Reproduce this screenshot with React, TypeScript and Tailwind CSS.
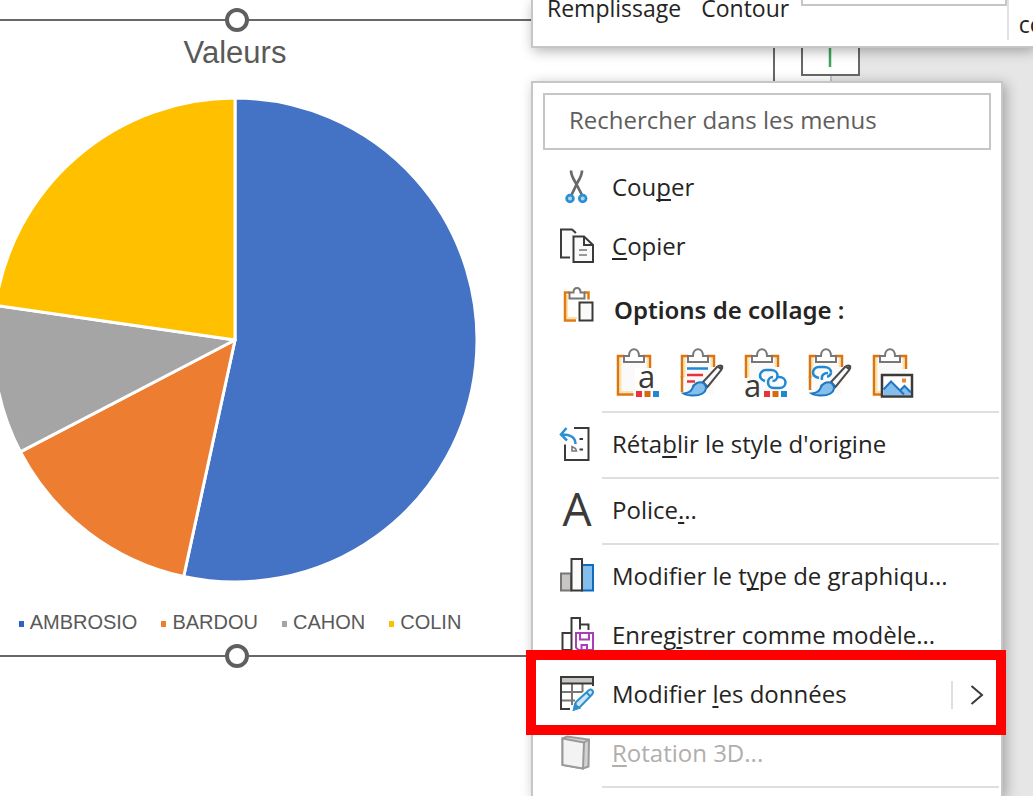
import React from "react";
import { clsx } from "clsx";

const slices = [
  { color: "#4472c4", path: "M235 242V0A242 242 0 1 1 183.700 478.500Z" },
  { color: "#ed7d31", path: "M235 242L183.700 478.500A242 242 0 0 1 20.300 353.800Z" },
  { color: "#a5a5a5", path: "M235 242L20.300 353.800A242 242 0 0 1 -4.500 207.400Z" },
  { color: "#ffc000", path: "M235 242L-4.500 207.400A242 242 0 0 1 235 0Z" },
];

const legend = [
  { label: "AMBROSIO", marker: "bg-[#2f62c4]" },
  { label: "BARDOU", marker: "bg-[#ed7d31]" },
  { label: "CAHON", marker: "bg-[#a5a5a5]" },
  { label: "COLIN", marker: "bg-[#ffc000]" },
];

function Handle({ className }: { className: string }) {
  return (
    <span
      className={clsx(
        "absolute left-1/2 size-6 -translate-x-1/2 rounded-full border-4 border-[#5f5f5f] bg-white",
        className
      )}
    />
  );
}

function Chart() {
  return (
    <section className="w-[775px] shrink-0 border-y-2 border-r-2 border-[#686868]">
      <div className="relative flex w-[474px] flex-col items-center pt-3.5 pb-[21px] font-['Liberation_Sans',sans-serif] text-[#595959]">
        <Handle className="-top-[13px]" />
        <h1 className="mr-1 text-[31px] leading-9">Valeurs</h1>
        <svg
          viewBox="0 0 474 484"
          className="mt-[27px] h-[484px] w-[474px] overflow-visible"
        >
          {slices.map((slice) => (
            <path
              key={slice.color}
              d={slice.path}
              fill={slice.color}
              stroke="#fff"
              strokeWidth="3"
              strokeLinejoin="round"
            />
          ))}
        </svg>
        <ul className="mt-7 ml-1.5 flex gap-6 text-[20px] leading-6">
          {legend.map((item) => (
            <li key={item.label} className="flex items-center gap-1.5">
              <span className={clsx("mt-1 h-1.5 w-[5px]", item.marker)} />
              {item.label}
            </li>
          ))}
        </ul>
        <Handle className="-bottom-[13px]" />
      </div>
    </section>
  );
}

const iconProps = {
  fill: "none",
  stroke: "#3b3a39",
  strokeWidth: 2,
  className: "h-9 w-[34px] shrink-0 overflow-visible",
  viewBox: "0 0 34 36",
};

function CutIcon() {
  return (
    <svg {...iconProps}>
      <path d="M11 .5c0 4 2 8 4.500 12l6.500 12.500M22 .5c0 4-2 8-4.500 12L11.500 25" stroke="#69696a" strokeWidth="2.700" />
      <circle cx="10" cy="28.500" r="3.400" fill="#a9d5f2" stroke="#2b8fd0" strokeWidth="2.700" />
      <circle cx="22.700" cy="28.500" r="3.400" fill="#a9d5f2" stroke="#2b8fd0" strokeWidth="2.700" />
    </svg>
  );
}

function CopyIcon() {
  return (
    <svg {...iconProps}>
      <path d="M10 28.500H1V.5h11l4 3.500" fill="#fafafa" />
      <path d="M13.500 7.500h10.500l9 8.500v17h-19.500z" fill="#fafafa" />
      <path d="M24 7.500v8.500h9" />
      <path d="M19 21h8M19 26h8" stroke="#797775" strokeWidth="1.500" />
    </svg>
  );
}

function PasteIcon() {
  return (
    <svg {...iconProps} viewBox="0 0 34 46" className="h-[46px] w-[34px] shrink-0">
      <path d="M7 8v23h10" stroke="#fbe3a8" strokeWidth="2" />
      <path d="M10 5.500H5v28h11M24 5.500h4.500v7" stroke="#e07b10" strokeWidth="2.500" />
      <path d="M9.500 11.500v-6h4c0-6 7-6 7 0h4v6z" fill="#fff" stroke="#797775" />
      <path d="M19.500 15.500h13v18h-13z" fill="#fafafa" />
    </svg>
  );
}

function ResetIcon() {
  return (
    <svg {...iconProps}>
      <path d="M14 1h14.500v32H5V17.500" />
      <path d="M19.500 12h3.500M19.500 22.500h3.500" />
      <path d="M12 19.500v4.500h4.500l-1-2.500z" stroke="#797775" strokeWidth="1.500" />
      <path d="M6.500 1L1 7.500l6 6M1 7.500c9-.5 14.500 2.500 14.500 9.500" stroke="#2b8fd0" strokeWidth="2.500" />
    </svg>
  );
}

function ChartTypeIcon() {
  return (
    <svg {...iconProps}>
      <path d="M1 14.500h10v17H1z" fill="#c8c6c4" stroke="#797775" />
      <path d="M22 6h11v25.500H22z" fill="#83beec" stroke="#0f6cbd" />
      <path d="M11.500 0H22v31.500H11.500z" fill="#fafafa" />
    </svg>
  );
}

function TemplateIcon() {
  return (
    <svg {...iconProps}>
      <path d="M11 15H2.500v17H12M11.500 32V0H20v11.500M20 6.500h8.500V12" />
      <path d="M16 15h17v17H18.500L16 29.500zM20 15v6.500h9V15M21.500 32v-5H27v5" stroke="#a83fb9" />
    </svg>
  );
}

function EditDataIcon() {
  return (
    <svg {...iconProps}>
      <path d="M1 0h32v6H1z" fill="#c8c6c4" stroke="none" />
      <path d="M12 6v22M22.500 6v9M1 15h21.500M1 23.500h14" stroke="#797775" />
      <path d="M33 9V0H1v32h9M1 6.500h32" />
      <path d="M14 32.500l2-7.500L28.500 13.500c3-2.500 6 1 3.500 4L20 30z" fill="#cde6f7" stroke="#2b8fd0" />
      <path d="M14 32.500l1-5 4 3.500zM26.500 15.500l4 4" fill="#2b8fd0" stroke="#2b8fd0" />
    </svg>
  );
}

function RotateIcon() {
  return (
    <svg {...iconProps} stroke="#9a9a9a">
      <path d="M2.500 2.500L7 .5l22 3-.5 27-5.500 2-20.500-3.500z" fill="#d2d2d2" />
      <path d="M2.500 2.500L24 6.500l-1 26-20.500-3.500z" fill="#f3f3f3" />
      <path d="M24 6.500l5-3" />
    </svg>
  );
}

function Board({ long = true }: { long?: boolean }) {
  return (
    <g fill="none">
      <path d="M3 10h32v38H3z" fill="#fafafa" />
      <path d={long ? "M5.500 11v35H18M32.500 11v12" : "M5.500 11v20M32.500 11v10"} stroke="#fbe3a8" strokeWidth="2" />
      <path
        d={long ? "M9 10H3v38.500h15.500M28 10h7v13" : "M9 10H3v22M28 10h7v11"}
        stroke="#db7412"
        strokeWidth="2.500"
      />
      <path d="M9 16v-6h5c0-9 10-9 10 0h5v6z" fill="#fff" stroke="#797775" strokeWidth="2" />
    </g>
  );
}

function Brush() {
  return (
    <g>
      <path d="M43 20c-2-1-4 0-5 1L24 36l4.500 5 13-16c1.500-2 2.500-3.500 1.500-5z" fill="#fafafa" stroke="#4a4a4a" strokeWidth="2" />
      <path d="M38 21l4 3.500 1-4.500z" fill="#4a4a4a" />
      <path d="M24.500 37c-5-2-10 1-11 5-1 3-4 5-9 5.500 4 2.500 14 3 19 0 4-2.500 5-7 1-10.500z" fill="#83beec" stroke="#1f77c4" strokeWidth="2" />
    </g>
  );
}

function Squares() {
  return (
    <g>
      <path d="M21 45h6v6h-6z" fill="#e8333a" />
      <path d="M29.500 45h6v6h-6z" fill="#d96a0b" />
      <path d="M38 45h6v6h-6z" fill="#2189d4" />
    </g>
  );
}

const pasteOptions = [
  {
    label: "Utiliser le thème de destination",
    art: (
      <>
        <Board />
        <path d="M20 22h22v22H20z" fill="#fff" />
        <text x="23" y="42" fontSize="31" fill="#3b3a39" fontFamily="Open Sans, sans-serif">a</text>
        <Squares />
      </>
    ),
  },
  {
    label: "Conserver la mise en forme source",
    art: (
      <>
        <Board long={false} />
        <path d="M3 30v16" stroke="#db7412" strokeWidth="2.500" />
        <path d="M8 22.500h21" stroke="#2189d4" strokeWidth="2.500" />
        <path d="M8 29h16M8 35.500h8" stroke="#e8333a" strokeWidth="2.500" />
        <Brush />
      </>
    ),
  },
  {
    label: "Utiliser le thème et lier les données",
    art: (
      <>
        <Board long={false} />
        <text x="1" y="51" fontSize="31" fill="#3b3a39" fontFamily="Open Sans, sans-serif">a</text>
        <g fill="none" stroke="#2189d4" strokeWidth="2.500">
          <path d="M22 35c-3-1-5-3-5-5.500s2.500-5.500 6-5.500h5c4 0 6.500 2.500 6.500 5.500s-2 5.500-5 5.500" />
          <path d="M35 31h1c4 0 6.500 2.500 6.500 5.500s-2.500 5.500-6 5.500H31c-4 0-6-2.500-6-5.500s2-5.500 5-5.500" />
        </g>
        <Squares />
      </>
    ),
  },
  {
    label: "Conserver la mise en forme et lier les données",
    art: (
      <>
        <Board long={false} />
        <path d="M3 30v14" stroke="#db7412" strokeWidth="2.500" />
        <g fill="none" stroke="#2189d4" strokeWidth="2.500">
          <path d="M12 32c-4-1-6-3-6-5.500S8 21 12 21h5c4 0 7 2 7 5.500" />
          <path d="M24 26.500c0 2-2 4-4 4M15 34c-1-5 2-7 6-7" />
        </g>
        <Brush />
      </>
    ),
  },
  {
    label: "Image",
    art: (
      <>
        <Board />
        <path d="M11 29h30v21.500H11z" fill="#fff" stroke="#3b3a39" strokeWidth="2.500" />
        <path d="M12.500 43.500l7.500-8 9 9 4.500-4.500 6.500 6v3H12.500z" fill="#83beec" />
        <path d="M12.500 43.500l7.500-8 13 13M29 44.500l4.500-4.500 6.500 6.500" fill="none" stroke="#1f77c4" strokeWidth="2" />
        <path d="M31 32.500h4v4h-4z" fill="#e08a3c" />
      </>
    ),
  },
];

type ItemProps = {
  icon: React.ReactNode;
  children: React.ReactNode;
  disabled?: boolean;
};

function MenuItem({ icon, children, disabled }: ItemProps) {
  return (
    <button
      disabled={disabled}
      className="flex h-[59px] w-full items-center gap-[18px] pl-[27px] text-left whitespace-nowrap disabled:text-[#b1aeac]"
    >
      {icon}
      <span className="pb-0.5">{children}</span>
    </button>
  );
}

// access key of a menu entry
function Key({ children }: { children: string }) {
  return (
    <u className="decoration-2 underline-offset-3 [text-decoration-skip-ink:none]">
      {children}
    </u>
  );
}

function Separator() {
  return <hr className="mt-[3px] mr-0.5 mb-0.5 ml-[69px] h-0.5 border-0 bg-[#e1dfdd]" />;
}

function ContextMenu() {
  return (
    <nav className="absolute top-[81px] bottom-0 left-[531px] w-[472px] border-2 border-b-0 border-[#c8c6c4] bg-white text-[24px] leading-8 text-[#252423] shadow-[3px_3px_12px_rgba(0,0,0,0.3)]">
      <div className="px-2.5 pt-2.5 pb-2">
        <input
          type="text"
          aria-label="Rechercher dans les menus"
          placeholder="Rechercher dans les menus"
          className="block h-[57px] w-full border-2 border-[#c8c6c4] px-6 pb-1 placeholder:text-[#605e5c] outline-none"
        />
      </div>
      <MenuItem icon={<CutIcon />}>
        Cou<Key>p</Key>er
      </MenuItem>
      <MenuItem icon={<CopyIcon />}>
        <Key>C</Key>opier
      </MenuItem>
      <div className="flex h-[68px] items-center gap-5 pl-[27px] font-['Noto_Sans',sans-serif] font-semibold">
        <PasteIcon />
        <h2>Options de collage :</h2>
      </div>
      <div className="flex h-16 items-start gap-5 pt-0.5 pl-[82px]">
        {pasteOptions.map((option) => (
          <button key={option.label} aria-label={option.label}>
            <svg viewBox="0 0 44 54" className="h-[54px] w-11 overflow-visible">
              {option.art}
            </svg>
          </button>
        ))}
      </div>
      <Separator />
      <MenuItem icon={<ResetIcon />}>
        Réta<Key>b</Key>lir le style d'origine
      </MenuItem>
      <Separator />
      <MenuItem
        icon={
          <span className="w-[34px] pb-1.5 text-center text-[46px] leading-none text-[#3b3a39]">
            A
          </span>
        }
      >
        Police<Key>.</Key>..
      </MenuItem>
      <Separator />
      <MenuItem icon={<ChartTypeIcon />}>
        Modifier le t<Key>y</Key>pe de graphiqu...
      </MenuItem>
      <MenuItem icon={<TemplateIcon />}>
        Enreg<Key>i</Key>strer comme modèle...
      </MenuItem>
      <div className="relative flex items-center">
        <MenuItem icon={<EditDataIcon />}>
          Modifier <Key>l</Key>es données
        </MenuItem>
        <button
          aria-label="Plus d'options"
          className="flex h-7 w-[50px] shrink-0 items-center border-l-2 border-[#e1dfdd] pl-[17px]"
        >
          <svg viewBox="0 0 14 20" className="h-5 w-3.5" fill="none" stroke="#3b3a39" strokeWidth="2">
            <path d="M1.500 1L12 10 1.500 19" />
          </svg>
        </button>
        <div className="pointer-events-none absolute -top-[15px] -right-[5px] -bottom-[11px] -left-[7px] border-10 border-[#ff0000]" />
      </div>
      <MenuItem icon={<RotateIcon />} disabled>
        <Key>R</Key>otation 3D...
      </MenuItem>
      <Separator />
    </nav>
  );
}

function MiniToolbar() {
  return (
    <div className="absolute top-0 right-0 left-[531px] flex h-12 items-start gap-5 overflow-x-clip border-b-2 border-l-2 border-[#c8c6c4] bg-white pl-3.5 text-[23px] leading-4 text-[#252423] shadow-[2px_3px_12px_rgba(0,0,0,0.3)]">
      <button>Remplissage</button>
      <button>Contour</button>
      <div className="-ml-2 flex h-10 flex-1 border-r-2 border-[#e1e1e6]">
        <div className="h-1.5 flex-1 border-x-2 border-b-2 border-[#c8c6c4]" />
      </div>
      <button className="-mr-8 -ml-2.5 pt-4">com</button>
    </div>
  );
}

export default function App() {
  return (
    <main className="relative h-screen overflow-hidden bg-[#e6e6e6] font-['Open_Sans',sans-serif]">
      <div className="flex h-full w-[832px] items-start border-r-2 border-[#c4c4c4] bg-white pt-[19px]">
        <Chart />
        <button
          aria-label="Éléments de graphique"
          className="ml-[26px] flex size-[59px] shrink-0 -translate-y-0.5 items-center justify-center border-2 border-[#686868] bg-white"
        >
          <svg viewBox="0 0 40 40" className="size-10" stroke="#3fa45b" strokeWidth="2.500">
            <path d="M19 0v40M0 18h40" />
          </svg>
        </button>
      </div>
      <MiniToolbar />
      <ContextMenu />
    </main>
  );
}
